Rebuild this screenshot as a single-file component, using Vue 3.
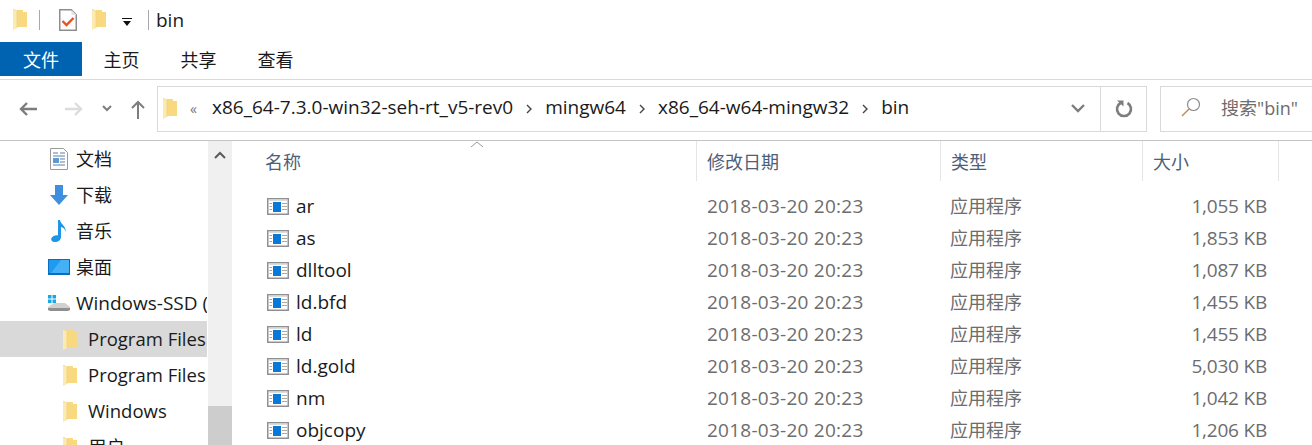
<script setup>
const tabs = ['主页', '共享', '查看']
const crumbs = ['x86_64-7.3.0-win32-seh-rt_v5-rev0', 'mingw64', 'x86_64-w64-mingw32', 'bin']
const folders = [
  { name: 'Program Files', active: true },
  { name: 'Program Files' },
  { name: 'Windows' },
  { name: '用户' }
]
const files = [
  { name: 'ar', size: '1,055 KB' },
  { name: 'as', size: '1,853 KB' },
  { name: 'dlltool', size: '1,087 KB' },
  { name: 'ld.bfd', size: '1,455 KB' },
  { name: 'ld', size: '1,455 KB' },
  { name: 'ld.gold', size: '5,030 KB' },
  { name: 'nm', size: '1,042 KB' },
  { name: 'objcopy', size: '1,206 KB' }
]
</script>

<template>
  <main class="window">
    <div class="titlebar">
      <svg class="folder-ic first" viewBox="0 0 14 21"><path d="M4 1h6v2h4v15H4z" fill="#f8d97f"/><path d="M0 0l4 2v17l-4 2z" fill="#fdeab0"/><path d="M0 0l4 2v17" fill="none" stroke="#efcf7a" stroke-width=".6"/></svg>
      <span class="sep"></span>
      <svg class="check-ic" viewBox="0 0 18 22"><path d="M.75.75h11.500l5 5v15.500H.75z" fill="#fff" stroke="#8e8e8e" stroke-width="1.500"/><path d="M12.500 1v5h5z" fill="#e4e4e4"/><path d="M3.500 12l4 4 7-7" fill="none" stroke="#e8501e" stroke-width="2.400"/></svg>
      <svg class="folder-ic second" viewBox="0 0 14 21"><path d="M4 1h6v2h4v15H4z" fill="#f8d97f"/><path d="M0 0l4 2v17l-4 2z" fill="#fdeab0"/><path d="M0 0l4 2v17" fill="none" stroke="#efcf7a" stroke-width=".6"/></svg>
      <svg class="drop-ic" viewBox="0 0 10 9"><path d="M0 0h10v1H0zM1 3h8L5 8z" fill="#111"/></svg>
      <span class="sep last"></span>
      <span class="title">bin</span>
    </div>

    <div class="ribbon">
      <div class="tab file">文件</div>
      <div v-for="t in tabs" :key="t" class="tab">{{ t }}</div>
    </div>

    <div class="addressbar">
      <svg class="nav-ic back" viewBox="0 0 20 16"><path d="M19 8H3M9 2L3 8l6 6" fill="none" stroke="#7d7d7d" stroke-width="2.400"/></svg>
      <svg class="nav-ic forward" viewBox="0 0 20 16"><path d="M1 8h16M11 2l6 6-6 6" fill="none" stroke="#dcdcdc" stroke-width="2.400"/></svg>
      <svg class="chev-small" viewBox="0 0 10 7"><path d="M1 1l4 4 4-4" fill="none" stroke="#7d7d7d" stroke-width="2"/></svg>
      <svg class="nav-ic up" viewBox="0 0 16 20"><path d="M8 20V3M2 9l6-6 6 6" fill="none" stroke="#7d7d7d" stroke-width="2"/></svg>

      <div class="pathbox">
        <svg class="folder-ic path-folder" viewBox="0 0 14 21"><path d="M4 1h6v2h4v15H4z" fill="#f8d97f"/><path d="M0 0l4 2v17l-4 2z" fill="#fdeab0"/><path d="M0 0l4 2v17" fill="none" stroke="#efcf7a" stroke-width=".6"/></svg>
        <span class="more">«</span>
        <template v-for="(c, i) in crumbs" :key="c">
          <span class="crumb">{{ c }}</span>
          <svg v-if="i < crumbs.length - 1" class="crumb-arrow" viewBox="0 0 6 10"><path d="M1 1l4 4-4 4" fill="none" stroke="#444" stroke-width="1.400"/></svg>
        </template>
        <svg class="path-chev" viewBox="0 0 14 9"><path d="M1 1l6 6 6-6" fill="none" stroke="#7d7d7d" stroke-width="2.400"/></svg>
        <div class="refresh">
          <svg viewBox="0 0 18 18" width="18" height="18"><path d="M5.500 3A7 7 0 1 0 12.500 3" fill="none" stroke="#7d7d7d" stroke-width="2.600"/><path d="M2 .5h6.500v6z" fill="#7d7d7d"/></svg>
        </div>
      </div>

      <div class="searchbox">
        <svg class="search-ic" viewBox="0 0 20 20"><circle cx="12.500" cy="7.500" r="6" fill="none" stroke="#8e8e8e" stroke-width="1.200"/><path d="M8 12l-7 7" stroke="#c08a5a" stroke-width="1.500"/></svg>
        <span>搜索"bin"</span>
      </div>
    </div>

    <div class="body">
      <aside class="nav">
        <div class="nav-list">
          <div class="nav-row cjk">
            <svg class="nav-icon" viewBox="0 0 18 22"><path d="M.5.5h13l4 4v17H.5z" fill="#fff" stroke="#9a9a9a"/><path d="M3 5h5M10 5h5M3 8h12M10 11h5M10 14h5M3 17h12" stroke="#5b7fa8"/><rect x="3" y="10" width="6" height="5" fill="#5a9bd5"/></svg>
            <span>文档</span>
          </div>
          <div class="nav-row cjk">
            <svg class="nav-icon" viewBox="0 0 18 22"><path d="M5 1h8v10h5l-9 10-9-10h5z" fill="#3f8fe0"/></svg>
            <span>下载</span>
          </div>
          <div class="nav-row cjk">
            <svg class="nav-icon" viewBox="0 0 18 22"><path d="M8 0h2c.5 4 6 6 6 12-1-3-3-4.500-5-5V17c0 3-3 5-6 5s-4.500-2-3.500-4 4.500-3.500 6.500-2.500z" fill="#1e96e6"/></svg>
            <span>音乐</span>
          </div>
          <div class="nav-row cjk">
            <svg class="nav-icon wide" viewBox="0 0 22 16"><rect width="22" height="16" fill="#0a6ec0"/><rect x="1" y="1" width="20" height="13" fill="#1e9bf0"/><path d="M3 14L13 1h8v13z" fill="#45b0f5"/></svg>
            <span>桌面</span>
          </div>
          <div class="nav-row">
            <svg class="nav-icon wide" viewBox="0 0 22 16"><path d="M0 0h3.500v3.500H0zM4.500 0H8v3.500H4.500zM0 4.500h3.500V8H0zM4.500 4.500H8V8H4.500z" fill="#16a8e8"/><path d="M0 12l6-4h11l5 4v1H0z" fill="#d0d0d0"/><path d="M0 13h22v2l-2 1H2l-2-1z" fill="#8f8f8f"/></svg>
            <span>Windows-SSD (</span>
          </div>
          <div v-for="(f, i) in folders" :key="i" class="nav-row sub" :class="{ active: f.active, cjk: i === 3 }">
            <svg class="folder-ic" viewBox="0 0 14 21"><path d="M4 1h6v2h4v15H4z" fill="#f8d97f"/><path d="M0 0l4 2v17l-4 2z" fill="#fdeab0"/><path d="M0 0l4 2v17" fill="none" stroke="#efcf7a" stroke-width=".6"/></svg>
            <span>{{ f.name }}</span>
          </div>
        </div>
        <div class="scrollbar">
          <svg class="scroll-up" viewBox="0 0 12 8"><path d="M1 7l5-5 5 5" fill="none" stroke="#5a5a5a" stroke-width="2"/></svg>
          <div class="thumb"></div>
        </div>
      </aside>

      <section class="list">
        <svg class="sort-ic" viewBox="0 0 14 7"><path d="M1 6l6-5 6 5" fill="none" stroke="#9a9a9a"/></svg>
        <div class="head">
          <div class="col c-name">名称</div>
          <div class="col c-date">修改日期</div>
          <div class="col c-type">类型</div>
          <div class="col c-size">大小</div>
        </div>
        <div v-for="f in files" :key="f.name" class="row">
          <div class="c-name file-name">
            <svg class="exe-ic" viewBox="0 0 22 17"><rect x=".75" y=".75" width="20.500" height="15.500" fill="#fff" stroke="#8f8f8f" stroke-width="1.500"/><rect x="1.500" y="1.500" width="19" height="1.500" fill="#dcdcdc"/><rect x="6" y="4" width="8" height="10" fill="#0b78d4"/><path d="M2.500 5.500h2.500M2.500 8.500h2.500M2.500 11.500h2.500M15 5.500h5M15 8.500h5M15 11.500h5" stroke="#a8a8a8"/></svg>
            <span>{{ f.name }}</span>
          </div>
          <div class="c-date cell date">2018-03-20 20:23</div>
          <div class="c-type cell cjk">应用程序</div>
          <div class="c-size cell size">{{ f.size }}</div>
        </div>
      </section>
    </div>
  </main>
</template>

<style>
html, body {
  margin: 0;
  background: #fff;
  overflow: hidden;
}
</style>

<style scoped>
.window {
  width: 1312px;
  height: 445px;
  overflow: hidden;
  background: #fff;
  color: #1a1a1a;
  font-family: "Open Sans", "Noto Sans CJK SC", sans-serif;
  font-size: 19px;
}

.titlebar {
  height: 42px;
  display: flex;
  align-items: center;
  box-sizing: border-box;
  padding-bottom: 3px;
}

.folder-ic {
  width: 14px;
  height: 21px;
  flex: none;
}

.folder-ic.first {
  margin-left: 13px;
}

.sep {
  width: 1px;
  height: 20px;
  background: #a8a8a8;
  margin-left: 12px;
}

.check-ic {
  width: 18px;
  height: 22px;
  margin-left: 19px;
}

.folder-ic.second {
  margin-left: 15px;
}

.drop-ic {
  width: 10px;
  height: 9px;
  margin-left: 16px;
  margin-top: 5px;
}

.sep.last {
  margin-left: 16px;
}

.title {
  margin-left: 7px;
}

.ribbon {
  height: 34px;
  display: flex;
  padding-bottom: 3px;
  border-bottom: 1px solid #dadada;
}

.tab {
  width: 77px;
  display: flex;
  align-items: center;
  justify-content: center;
  font-size: 18px;
}

.tab.file {
  width: 82px;
  margin-right: 1px;
  background: #0063b1;
  color: #fff;
}

.addressbar {
  height: 61px;
  box-sizing: border-box;
  border-bottom: 1px solid #c4c4c4;
  padding-bottom: 3px;
  display: flex;
  align-items: center;
}

.nav-ic.back {
  width: 20px;
  height: 16px;
  margin-left: 18px;
}

.nav-ic.forward {
  width: 20px;
  height: 16px;
  margin-left: 26px;
}

.chev-small {
  width: 10px;
  height: 7px;
  margin-left: 18px;
}

.nav-ic.up {
  width: 16px;
  height: 20px;
  margin-left: 18px;
}

.pathbox {
  margin-left: 11px;
  width: 990px;
  height: 46px;
  box-sizing: border-box;
  border: 1px solid #d9d9d9;
  display: flex;
  align-items: center;
  padding-left: 5px;
}

.path-folder {
  margin-right: 13px;
}

.more {
  color: #777;
  font-size: 14px;
  width: 22px;
}

.crumb {
  white-space: nowrap;
  margin-bottom: 3px;
}

.crumb-arrow {
  width: 6px;
  height: 10px;
  margin: 0 13px;
}

.path-chev {
  width: 14px;
  height: 9px;
  margin-left: auto;
  margin-right: 15px;
}

.refresh {
  width: 45px;
  height: 100%;
  border-left: 1px solid #d9d9d9;
  display: flex;
  align-items: center;
  justify-content: center;
}

.searchbox {
  margin-left: 13px;
  flex: 1;
  height: 46px;
  box-sizing: border-box;
  border: 1px solid #d9d9d9;
  border-right: none;
  display: flex;
  align-items: center;
  padding-left: 20px;
  padding-bottom: 3px;
  color: #6d6d6d;
  font-size: 18px;
}

.search-ic {
  width: 20px;
  height: 20px;
  margin-right: 20px;
}

.body {
  display: flex;
  height: 304px;
}

.nav {
  width: 232px;
  flex: none;
  display: flex;
}

.nav-list {
  width: 207px;
  overflow: hidden;
}

.nav-row {
  height: 36px;
  display: flex;
  align-items: center;
  padding-left: 50px;
  white-space: nowrap;
  position: relative;
}

.cjk {
  font-size: 18px;
}

.nav-row span {
  position: absolute;
  left: 76px;
}

.nav-row.cjk span {
  margin-bottom: 2px;
}

.nav-icon {
  width: 18px;
  height: 22px;
}

.nav-icon.wide {
  width: 22px;
  height: 16px;
  margin-left: -2px;
}

.nav-row.sub {
  padding-left: 63px;
  font-size: 18.500px;
}

.nav-row.sub span {
  left: 88px;
  margin-bottom: 2px;
}

.nav-row.active {
  background: #d9d9d9;
}

.scrollbar {
  width: 24px;
  margin-left: 1px;
  background: #f0f0f0;
  position: relative;
}

.scroll-up {
  position: absolute;
  top: 10px;
  left: 6px;
  width: 12px;
  height: 8px;
}

.thumb {
  position: absolute;
  left: 0;
  right: 0;
  top: 265px;
  bottom: 0;
  background: #cdcdcd;
}

.list {
  flex: 1;
  position: relative;
  padding-left: 23px;
}

.sort-ic {
  position: absolute;
  left: 238px;
  top: 0;
  width: 14px;
  height: 7px;
}

.head {
  display: flex;
  height: 41px;
  color: #4c607a;
  font-size: 18px;
  margin-bottom: 8px;
}

.col {
  height: 40px;
  box-sizing: border-box;
  padding-top: 7px;
  padding-left: 10px;
  border-right: 1px solid #e5e5e5;
}

.c-name {
  width: 442px;
  box-sizing: border-box;
}

.c-date {
  width: 244px;
  box-sizing: border-box;
}

.c-type {
  width: 202px;
  box-sizing: border-box;
}

.c-size {
  width: 136px;
  box-sizing: border-box;
}

.row {
  display: flex;
  height: 32px;
  align-items: center;
}

.file-name {
  display: flex;
  align-items: center;
  padding-left: 12px;
}

.exe-ic {
  width: 22px;
  height: 17px;
  margin-right: 7px;
}

.cell {
  color: #6d6d6d;
  padding-left: 10px;
}

.date {
  letter-spacing: 0.25px;
}

.c-type.cell {
  padding-left: 9px;
  padding-bottom: 2px;
}

.size {
  text-align: right;
  padding-right: 12px;
  letter-spacing: -0.2px;
}
</style>
